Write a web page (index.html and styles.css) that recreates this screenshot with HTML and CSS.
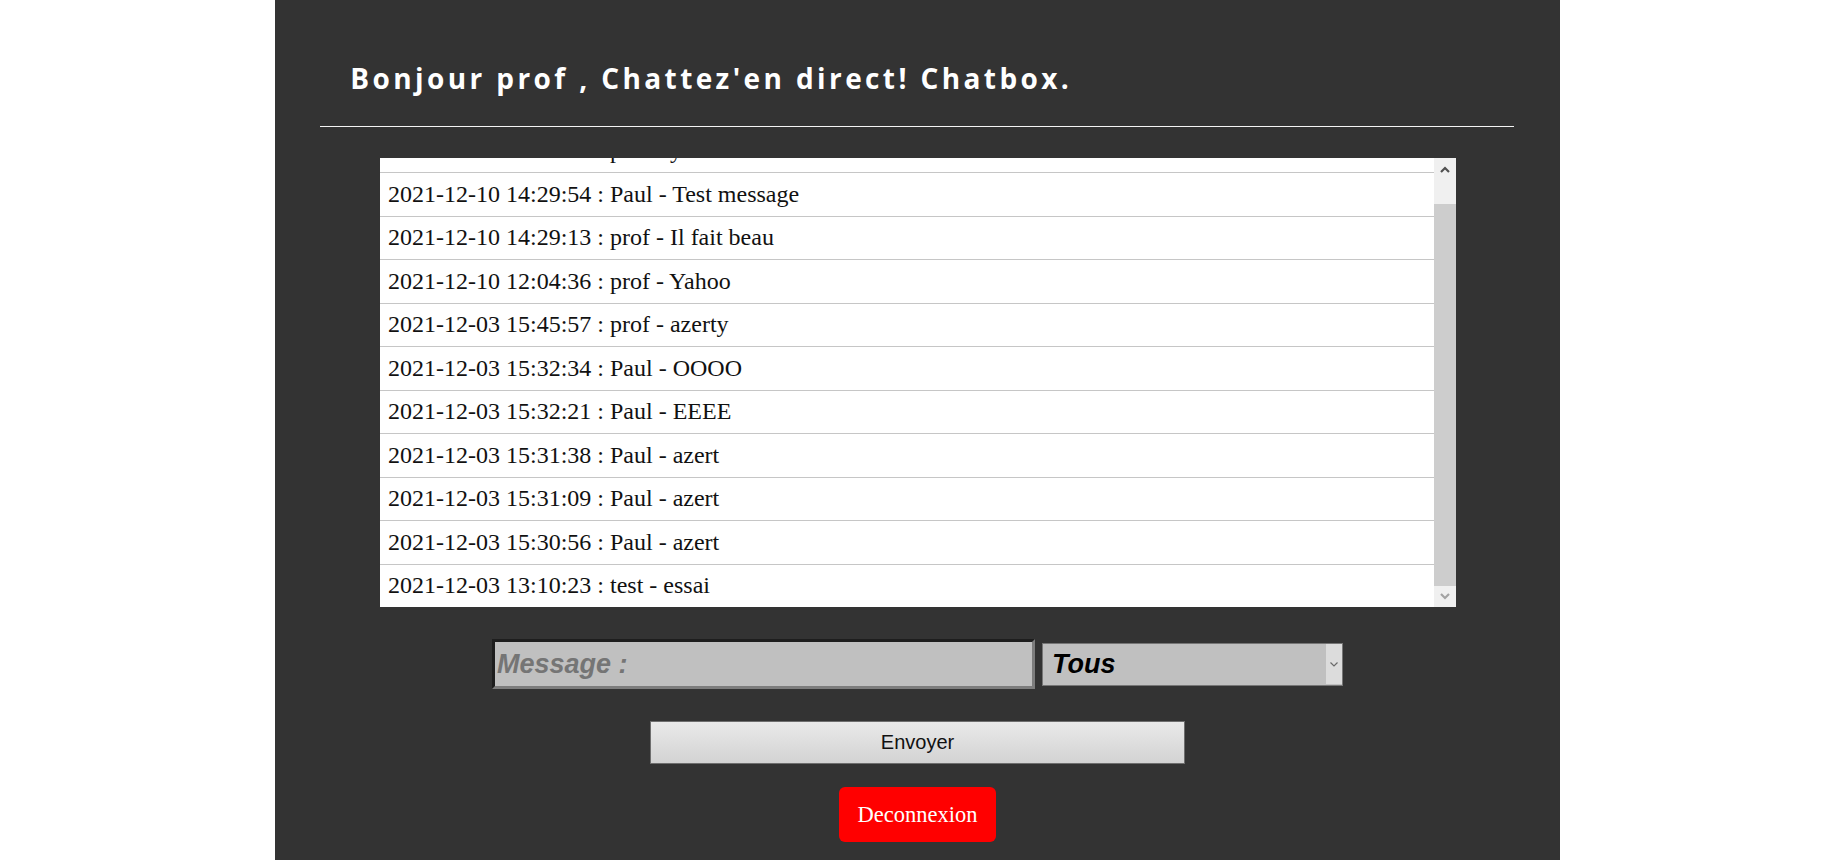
FILE: index.html
```html
<!DOCTYPE html>
<html lang="fr">
<head>
<meta charset="utf-8">
<title>Chatbox</title>
<link rel="stylesheet" href="styles.css">
</head>
<body>
<div class="panel">
  <header class="head">
    <h1 class="title">Bonjour prof , Chattez'en direct! Chatbox.</h1>
  </header>
  <hr class="rule">
  <div class="chatbox">
    <div class="messages">
      <ul class="list">
        <li class="row">2021-12-10 14:30:12 : prof - yo</li>
        <li class="row">2021-12-10 14:29:54 : Paul - Test message</li>
        <li class="row">2021-12-10 14:29:13 : prof - Il fait beau</li>
        <li class="row">2021-12-10 12:04:36 : prof - Yahoo</li>
        <li class="row">2021-12-03 15:45:57 : prof - azerty</li>
        <li class="row">2021-12-03 15:32:34 : Paul - OOOO</li>
        <li class="row">2021-12-03 15:32:21 : Paul - EEEE</li>
        <li class="row">2021-12-03 15:31:38 : Paul - azert</li>
        <li class="row">2021-12-03 15:31:09 : Paul - azert</li>
        <li class="row">2021-12-03 15:30:56 : Paul - azert</li>
        <li class="row">2021-12-03 13:10:23 : test - essai</li>
      </ul>
    </div>
    <div class="scrollbar">
      <div class="sb-btn">
        <svg width="10" height="7" viewBox="0 0 10 7"><path d="M1 6 L5 2 L9 6" fill="none" stroke="#505050" stroke-width="2.2"/></svg>
      </div>
      <div class="sb-track"><div class="sb-thumb"></div></div>
      <div class="sb-btn sb-down">
        <svg width="10" height="7" viewBox="0 0 10 7"><path d="M1 1 L5 5 L9 1" fill="none" stroke="#a3a3a3" stroke-width="2.2"/></svg>
      </div>
    </div>
  </div>
  <form class="form">
    <div class="inputs">
      <input class="msg" type="text" placeholder="Message :">
      <div class="select-wrap">
        <select class="dest">
          <option>Tous</option>
        </select>
        <span class="select-arrow">
          <svg width="8" height="5" viewBox="0 0 8 5"><path d="M0.5 0.5 L4 4 L7.5 0.5" fill="none" stroke="#6a6a6a" stroke-width="1.2"/></svg>
        </span>
      </div>
    </div>
    <button class="send" type="button">Envoyer</button>
    <button class="logout" type="button">Deconnexion</button>
  </form>
</div>
</body>
</html>
```
FILE: styles.css
```css
html, body {
  margin: 0;
  padding: 0;
  background: #ffffff;
}

.panel {
  width: 70%;
  margin: 0 auto;
  min-height: 100vh;
  background: #333333;
  display: flex;
  flex-direction: column;
}

.head {
  padding: 56px 0 0 75px;
  height: 70px;
}

.title {
  margin: 0;
  font-family: "Open Sans", "DejaVu Sans", sans-serif;
  font-weight: 700;
  font-size: 28px;
  line-height: 44px;
  letter-spacing: 3.4px;
  color: #ffffff;
}

.rule {
  margin: 0 46px 0 45px;
  border: none;
  height: 1px;
  background: #f4f4f4;
}

.chatbox {
  width: 1076px;
  height: 449px;
  margin: 31px auto 0;
  display: flex;
  background: #ffffff;
}

.messages {
  flex: 1;
  overflow: hidden;
}

.list {
  list-style: none;
  margin: -28.5px 0 0 0;
  padding: 0;
}

.row {
  font-family: "Liberation Serif", "Times New Roman", serif;
  font-size: 24px;
  line-height: 27.5px;
  color: #111111;
  padding: 7.5px 8px 7.5px 8.5px;
  border-bottom: 1px solid #c6c6c6;
  white-space: nowrap;
}

.scrollbar {
  width: 22px;
  background: #f0f0f0;
  display: flex;
  flex-direction: column;
}

.sb-btn {
  height: 22px;
  display: flex;
  align-items: center;
  justify-content: center;
}

.sb-down {
  height: 21px;
}

.sb-track {
  flex: 1;
  display: flex;
  flex-direction: column;
  justify-content: flex-end;
}

.sb-thumb {
  height: 382px;
  background: #cdcdcd;
}

.form {
  margin: 32px 0 0;
  display: flex;
  flex-direction: column;
  align-items: center;
}

.inputs {
  display: flex;
  align-items: center;
  gap: 7px;
}

.msg {
  box-sizing: border-box;
  width: 543px;
  height: 50px;
  margin: 0;
  padding: 0 2px;
  background: #c0c0c0;
  border-style: solid;
  border-width: 3px;
  border-color: #1e1e1e #7d7d7d #7d7d7d #1e1e1e;
  font-family: "Liberation Sans", Arial, sans-serif;
  font-size: 27px;
  font-weight: 700;
  font-style: italic;
  color: #000000;
  outline: none;
}

.msg::placeholder {
  color: #757575;
  opacity: 1;
}

.select-wrap {
  position: relative;
  width: 301px;
  height: 43px;
}

.dest {
  box-sizing: border-box;
  width: 301px;
  height: 43px;
  margin: 0;
  padding: 0 0 0 9px;
  appearance: none;
  -webkit-appearance: none;
  background: #c0c0c0;
  border: 1.5px solid #767676;
  border-radius: 0;
  font-family: "Liberation Sans", Arial, sans-serif;
  font-size: 27px;
  font-weight: 700;
  font-style: italic;
  color: #000000;
}

.select-arrow {
  position: absolute;
  top: 1.5px;
  right: 1.5px;
  bottom: 1.5px;
  width: 16px;
  background: #dcdcdc;
  display: flex;
  align-items: center;
  justify-content: center;
  pointer-events: none;
}

.send {
  box-sizing: border-box;
  width: 535px;
  height: 43px;
  margin: 32px 0 0;
  background: linear-gradient(#e9e9e9, #d3d3d3);
  border: 1.5px solid #6e6e6e;
  border-radius: 0;
  font-family: "Liberation Sans", Arial, sans-serif;
  font-size: 20px;
  color: #111111;
}

.logout {
  box-sizing: border-box;
  width: 157px;
  height: 55px;
  margin: 23px 0 0;
  padding: 0;
  background: #ff0000;
  border: none;
  border-radius: 6px;
  font-family: "Liberation Serif", "Times New Roman", serif;
  font-size: 22.5px;
  color: #ffffff;
}
```
